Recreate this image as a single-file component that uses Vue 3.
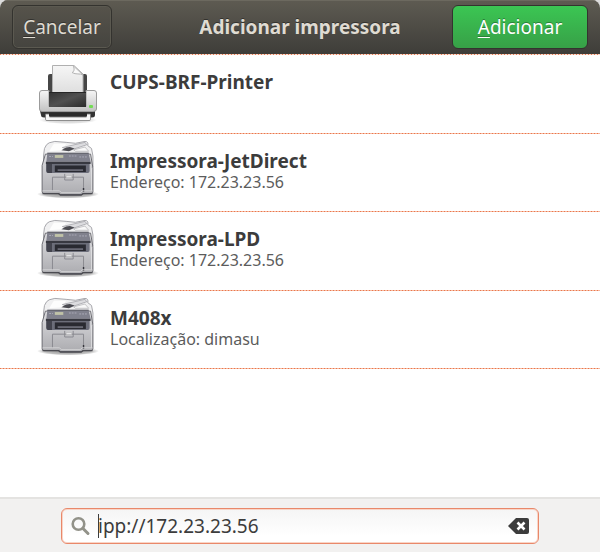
<script setup>
import { ref } from 'vue'

const printers = [
  { name: 'CUPS-BRF-Printer', detail: '', icon: 'printer' },
  { name: 'Impressora-JetDirect', detail: 'Endereço: 172.23.23.56', icon: 'multifunction' },
  { name: 'Impressora-LPD', detail: 'Endereço: 172.23.23.56', icon: 'multifunction' },
  { name: 'M408x', detail: 'Localização: dimasu', icon: 'multifunction' },
]
const address = ref('ipp://172.23.23.56')
</script>

<template>
  <div class="dialog">
    <svg class="defs" aria-hidden="true">
      <defs>
        <linearGradient id="paper" x1="0" y1="0" x2="0" y2="1">
          <stop offset="0" stop-color="#f6f6f6" /><stop offset="1" stop-color="#dcdcdc" />
        </linearGradient>
        <linearGradient id="shell" x1="0" y1="0" x2="0" y2="1">
          <stop offset="0" stop-color="#f6f6f6" /><stop offset="1" stop-color="#c2c2c2" />
        </linearGradient>
        <linearGradient id="dark" x1="0" y1="0" x2="1" y2="1">
          <stop offset="0" stop-color="#333" /><stop offset=".5" stop-color="#505050" /><stop offset="1" stop-color="#2b2b2b" />
        </linearGradient>
        <linearGradient id="mfp" x1="0" y1="0" x2="0" y2="1">
          <stop offset="0" stop-color="#dedee1" /><stop offset="1" stop-color="#acacb0" />
        </linearGradient>
        <radialGradient id="shade">
          <stop offset="0" stop-color="#000" stop-opacity=".5" /><stop offset=".75" stop-color="#000" stop-opacity=".28" /><stop offset="1" stop-color="#000" stop-opacity="0" />
        </radialGradient>
        <symbol id="printer" viewBox="0 0 64 64">
          <ellipse cx="32" cy="58" rx="29" ry="4" fill="url(#shade)" opacity=".4" />
          <rect x="12" y="12" width="39" height="22" rx="2" fill="#464646" />
          <path d="M16.500 3.500H38L47 12V34H16.500Z" fill="url(#paper)" stroke="#b0b0b0" />
          <path d="M37 3.500C39 7 38 10 36 10.500C40 13 44 11 47 13Z" fill="#fafafa" stroke="#b4b4b4" />
          <path d="M4 49H59V53Q59 55.500 56 55.500H8Q5 55.500 5 53Z" fill="#333" />
          <path d="M6 28.500H13V44.500H50V28.500H58Q60.500 28.500 60.500 31V47Q60.500 49.500 57 49.500H6Q3.500 49.500 3.500 47V31Q3.500 28.500 6 28.500Z" fill="url(#shell)" stroke="#9b9b9b" />
          <path d="M13 30H50V45H13Z" fill="url(#dark)" />
          <path d="M13 30.500H50" stroke="#262626" />
          <path d="M9.500 52H13.500V55H50.500V52H54.500V57.500Q54.500 58.500 53 58.500H11Q9.500 58.500 9.500 57.500Z" fill="#f7f7f7" stroke="#777" stroke-width=".8" />
          <rect x="13" y="51" width="38" height="3" fill="#2a2a2a" />
          <rect x="53" y="43" width="4" height="3" rx="1" fill="#74dc55" />
        </symbol>
        <symbol id="multifunction" viewBox="-2 0 68 68">
          <ellipse cx="32" cy="57.500" rx="33" ry="4.500" fill="url(#shade)" opacity=".9" />
          <path d="M6 17L7 9Q9 4 12 3L18 1.500L30 2.500L40 3.500L50 1.500Q54 1.500 53 6L57 9L58.500 17V29H6Z" fill="#f0f0f1" stroke="#a2a2a7" />
          <path d="M12 12L17 4H30L26 11Z" fill="#fdfdfd" />
          <path d="M26 8L50 2.500L52 5L34 11Z" fill="#dcdcdf" stroke="#a2a2a7" stroke-width=".8" />
          <path d="M30 8L34 7.500L39 9L33 12L25 11Z" fill="#4b4b51" />
          <path d="M38 10.500L50 7.500L54 12H40Z" fill="#f9f9f9" stroke="#acacb0" stroke-width=".7" />
          <path d="M8 15H56L58.500 30V55Q58.500 57 56 57H48L46 58H24L22 57H7Q4.500 57 4.500 55V27Z" fill="url(#mfp)" stroke="#66666d" />
          <path d="M10 14H54L56 23H9Z" fill="#80818d" />
          <path d="M10 14H54" stroke="#50515b" />
          <rect x="18" y="16" width="9" height="3" fill="#c0c3a8" />
          <path d="M12 17.500H16M33 17H41M44 18H52" stroke="#acacba" stroke-dasharray="2 1" />
          <path d="M8.500 23H56V25.500H8.500Z" fill="#383941" />
          <path d="M9 25.500H55V33Q55 35 53 35H11Q9 35 9 33Z" fill="#6c6e7a" />
          <path d="M9 25.500H15V35H11Q9 35 9 33Z" fill="#43444e" />
          <path d="M18 27H51V34H18Z" fill="#292a31" />
          <path d="M21 31H48V33H21Z" fill="#686974" />
          <path d="M57 30V54" fill="none" stroke="#ececee" opacity=".7" />
          <path d="M15.500 54V39.500H48.500V54M28.500 36V42.500H37.500V36" fill="none" stroke="#88888e" />
          <path d="M30 38H36V40H30Z" fill="#eaeaec" stroke="#aaa" stroke-width=".5" />
          <path d="M48.500 51V55" stroke="#34343b" stroke-width="1.500" />
          <path d="M5 54H23L25 56H45L47 54H58" fill="none" stroke="#d5d5d8" />
          <path d="M5 57H22L24 58.500H46L48 57H58" fill="none" stroke="#4b4b51" stroke-width="1.500" />
        </symbol>
      </defs>
    </svg>

    <header class="titlebar">
      <button type="button" class="button cancel"><u>C</u>ancelar</button>
      <h1>Adicionar impressora</h1>
      <button type="button" class="button add"><u>A</u>dicionar</button>
    </header>

    <ul class="list">
      <li v-for="printer in printers" :key="printer.name" class="row">
        <svg class="device" aria-hidden="true"><use :href="'#' + printer.icon" /></svg>
        <div class="info">
          <strong>{{ printer.name }}</strong>
          <span v-if="printer.detail">{{ printer.detail }}</span>
        </div>
      </li>
    </ul>

    <footer class="footer">
      <div class="search">
        <svg class="lens" viewBox="0 0 20 20" aria-hidden="true">
          <circle cx="7.500" cy="8" r="5.800" fill="none" stroke="#929289" stroke-width="2.600" />
          <path d="M12 12.500L17 17.500" stroke="#929289" stroke-width="3" stroke-linecap="round" />
        </svg>
        <div class="field">
          <input v-model="address" type="text" aria-label="Endereço da impressora" spellcheck="false" />
          <span class="caret"></span>
        </div>
        <button type="button" class="clear" aria-label="Limpar" @click="address = ''">
          <svg viewBox="0 0 22 16" aria-hidden="true">
            <path d="M8 0H19Q21 0 21 2V14Q21 16 19 16H8L0 8Z" fill="#3c3c3c" />
            <path d="M9.500 4.500L16.500 11.500M16.500 4.500L9.500 11.500" stroke="#fff" stroke-width="2.600" />
          </svg>
        </button>
      </div>
    </footer>
  </div>
</template>

<style>
body {
  margin: 0;
  background: #dcdcdc;
}
</style>

<style scoped>
.dialog {
  box-sizing: border-box;
  display: flex;
  flex-direction: column;
  min-height: 100vh;
  overflow: hidden;
  border-radius: 8px 8px 0 0;
  background: #fff;
  color: #3c3c3c;
  font-family: "Noto Sans", "Open Sans", sans-serif;
  font-size: 19px;
}
.defs {
  position: absolute;
  width: 0;
  height: 0;
}
.titlebar {
  display: grid;
  grid-template-columns: 1fr auto 1fr;
  align-items: center;
  box-sizing: border-box;
  height: 54px;
  padding: 0 12px;
  background: linear-gradient(#5e5b52, #3e3d39);
  box-shadow: inset 0 1px #6c695f;
  color: #dfdbd2;
}
h1 {
  margin: 0;
  font-size: 19px;
  font-weight: 700;
  line-height: 24px;
  text-shadow: 0 -1px #33322e;
}
.button {
  box-sizing: border-box;
  height: 44px;
  padding: 0 10px;
  border: 1px solid #34332f;
  border-radius: 6px;
  color: #dfdbd2;
  font: inherit;
  line-height: 24px;
  text-shadow: 0 -1px #33322e;
}
.cancel {
  justify-self: start;
  min-width: 100px;
  background: linear-gradient(#56534b, #45443f);
  box-shadow: inset 0 0 0 1px #5b5950;
}
.add {
  justify-self: end;
  min-width: 136px;
  background: linear-gradient(#3bc653, #37a047);
  color: #fff;
  text-shadow: 0 -1px #2b8038;
}
u {
  text-decoration-thickness: 1px;
  text-underline-offset: 3px;
}
.list {
  display: grid;
  grid-auto-rows: 1fr;
  box-sizing: border-box;
  min-height: 315px;
  margin: 0;
  padding: 1px 0 0;
  background: repeating-linear-gradient(90deg, #e57a50 0 1px, #fbd9cb 1px 3px) top / 100% 1px no-repeat;
  list-style: none;
}
.row {
  display: flex;
  align-items: center;
  gap: 10px;
  padding: 0 36px 1px;
  background: repeating-linear-gradient(90deg, #e8764b 0 1px, #f6b89f 1px 3px) bottom / 100% 1px no-repeat;
}
.device {
  flex: none;
  width: 64px;
  height: 64px;
}
.info {
  display: flex;
  flex-direction: column;
  align-self: flex-start;
  padding-top: 16px;
}
.info strong {
  line-height: 22px;
}
.info span {
  color: #5c5c5c;
  font-size: 16px;
  line-height: 20px;
}
.footer {
  margin-top: auto;
  padding: 9px 61px 8px;
  border-top: 2px solid #e4e3e1;
  background: #f2f1f0;
}
.search {
  display: flex;
  align-items: center;
  box-sizing: border-box;
  height: 36px;
  padding: 0 8px 0 9px;
  border: 1px solid #e9886a;
  border-radius: 6px;
  background: linear-gradient(#f5f5f5, #fff 80%);
  box-shadow: inset 0 0 0 1px #f9d5c7;
}
.lens {
  flex: none;
  width: 20px;
  height: 20px;
  margin-right: 7px;
}
.field {
  position: relative;
  flex: 1;
  display: flex;
  min-width: 0;
}
input {
  width: 100%;
  min-width: 0;
  padding: 0;
  border: 0;
  outline: 0;
  background: none;
  color: #3c3c3c;
  font: inherit;
  line-height: 24px;
}
.caret {
  position: absolute;
  top: 0;
  left: 0;
  width: 1px;
  height: 24px;
  background: #3c3c3c;
}
.clear {
  display: flex;
  padding: 0;
  border: 0;
  background: none;
}
.clear svg {
  width: 22px;
  height: 16px;
}
</style>
